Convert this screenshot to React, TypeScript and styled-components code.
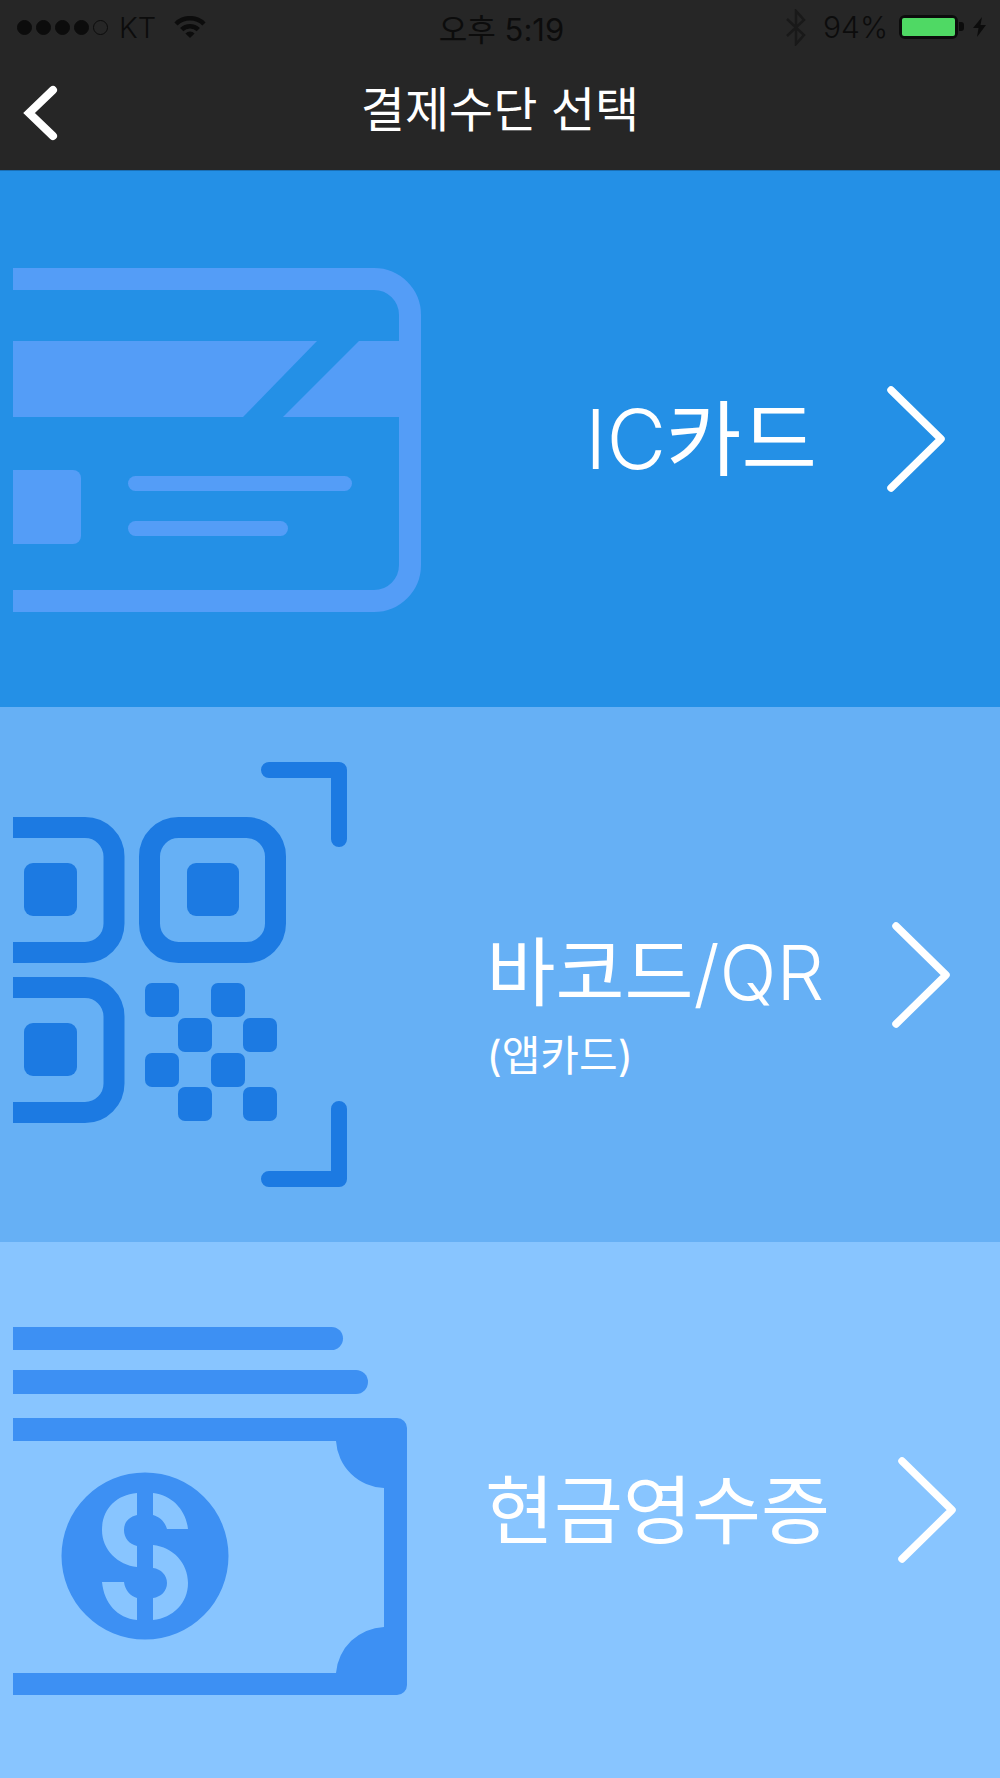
import React from "react";
import styled, { createGlobalStyle } from "styled-components";

const GlobalStyle = createGlobalStyle`
  html, body {
    margin: 0;
    padding: 0;
    background: #88c5ff;
  }
  * {
    box-sizing: border-box;
  }
`;

const FONT = `Inter, "Noto Sans CJK KR", "Liberation Sans", sans-serif`;

const Page = styled.div`
  width: 1000px;
  height: 1778px;
  display: flex;
  flex-direction: column;
  font-family: ${FONT};
  overflow: hidden;
`;

const Header = styled.header`
  height: 171px;
  background: #262626;
  border-bottom: 1px solid #1a6fb5;
  display: flex;
  flex-direction: column;
`;

const StatusBar = styled.div`
  height: 54px;
  padding: 0 14px 0 17px;
  display: grid;
  grid-template-columns: 1fr auto 1fr;
  align-items: center;
  color: #0c0c0c;
  font-size: 29px;
  font-weight: 300;
`;

const StatusLeft = styled.div`
  display: flex;
  align-items: center;
`;

const StatusRight = styled.div`
  display: flex;
  align-items: center;
  justify-content: flex-end;
`;

const Signal = styled.div`
  display: flex;
  gap: 4px;
  margin-right: 11px;
`;

const Dot = styled.span<{ $empty?: boolean }>`
  width: 15px;
  height: 15px;
  border-radius: 50%;
  border: 1.5px solid #0c0c0c;
  background: ${(p) => (p.$empty ? "transparent" : "#0c0c0c")};
`;

const Carrier = styled.span`
  margin-right: 18px;
`;

const Clock = styled.span`
  font-size: 31px;
  font-weight: 400;
`;

const Percent = styled.span`
  font-size: 30px;
  margin: 0 11px 0 17px;
`;

const Battery = styled.div`
  position: relative;
  width: 59px;
  height: 24px;
  border: 3px solid #0c0c0c;
  border-radius: 6px;
  margin-right: 15px;
  &::after {
    content: "";
    position: absolute;
    right: -9px;
    top: 4px;
    width: 5px;
    height: 9px;
    background: #0c0c0c;
    border-radius: 0 3px 3px 0;
  }
`;

const BatteryFill = styled.div`
  height: 100%;
  background: #4fd964;
  border-radius: 2px;
`;

const NavBar = styled.div`
  flex: 1;
  padding-bottom: 5px;
  display: grid;
  grid-template-columns: 1fr auto 1fr;
  align-items: center;
`;

const BackButton = styled.div`
  display: flex;
  padding: 6px 0 0 22px;
`;

const Title = styled.h1`
  margin: 0;
  color: #fff;
  font-size: 48px;
  font-weight: 400;
  line-height: 1;
`;

const Panel = styled.section<{ $bg: string; $right: number }>`
  flex: 1;
  background: ${(p) => p.$bg};
  display: flex;
  align-items: center;
  padding-left: 13px;
  padding-right: ${(p) => p.$right}px;
`;

const IconSlot = styled.div<{ $top: number }>`
  display: flex;
  margin-top: ${(p) => p.$top}px;
`;

const Label = styled.div<{ $gap: number }>`
  margin-left: auto;
  margin-right: ${(p) => p.$gap}px;
  padding-top: 2px;
  color: #fff;
  display: flex;
  flex-direction: column;
`;

const MainText = styled.div<{ $size: number }>`
  font-size: ${(p) => p.$size}px;
  font-weight: 400;
  line-height: 90px;
  white-space: nowrap;
`;

const Latin = styled.span`
  font-weight: 300;
`;

const SubText = styled.div`
  font-size: 42px;
  font-weight: 400;
  line-height: 50px;
  margin-top: 13px;
  margin-bottom: -57px;
  white-space: nowrap;
`;

const Chevron = () => (
  <svg width="60" height="108" viewBox="0 0 60 108" fill="none">
    <path d="M5 5 L55 54 L5 103" stroke="#fff" strokeWidth="7.5" strokeLinecap="round" strokeLinejoin="round" />
  </svg>
);

const BackIcon = () => (
  <svg width="36" height="60" viewBox="0 0 36 60" fill="none">
    <path d="M31 7 L7 30 L31 53" stroke="#fff" strokeWidth="8" strokeLinecap="round" strokeLinejoin="miter" />
  </svg>
);

const WifiIcon = () => (
  <svg width="32" height="22" viewBox="0 0 32 22" fill="#0c0c0c">
    <path d="M16 22 L11.400 17.400 A6.500 6.500 0 0 1 20.600 17.400 Z" />
    <path d="M6.100 12.100 A14 14 0 0 1 25.900 12.100 L22.700 15.300 A9.500 9.500 0 0 0 9.300 15.300 Z" />
    <path d="M0.400 6.400 A22 22 0 0 1 31.600 6.400 L28.400 9.600 A17.500 17.500 0 0 0 3.600 9.600 Z" />
  </svg>
);

const BluetoothIcon = () => (
  <svg width="20" height="37" viewBox="0 0 20 37" fill="none">
    <path d="M1 10 L18 26 L10 35 V2 L18 11 L1 27" stroke="#191919" strokeWidth="2.500" />
  </svg>
);

const BoltIcon = () => (
  <svg width="13" height="20" viewBox="0 0 13 20" fill="#0c0c0c">
    <path d="M9 0 L0 11 H5.500 L4 20 L13 8 H7.500 Z" />
  </svg>
);

const CardIcon = () => (
  <svg width="408" height="344" viewBox="13 268 408 344" fill="#549df7">
    <path d="M13 279 H374 A36 36 0 0 1 410 315 V565 A36 36 0 0 1 374 601 H13" fill="none" stroke="#549df7" strokeWidth="22" />
    <path d="M13 341 H317 L243 417 H13 Z" />
    <path d="M359 341 H399 V417 H283 Z" />
    <path d="M13 470 H73 A8 8 0 0 1 81 478 V536 A8 8 0 0 1 73 544 H13 Z" />
    <rect x="128" y="476" width="224" height="15" rx="7.500" />
    <rect x="128" y="521" width="160" height="15" rx="7.500" />
  </svg>
);

const QR_DOTS: [number, number][] = [
  [145, 983],
  [211, 983],
  [178, 1018],
  [243, 1018],
  [145, 1053],
  [211, 1053],
  [178, 1087],
  [243, 1087],
];

const QrIcon = () => (
  <svg width="334" height="425" viewBox="13 762 334 425" fill="#1c7ae2">
    <g fill="none" stroke="#1c7ae2" strokeWidth="21">
      <path d="M13 827.500 H85 A29 29 0 0 1 114 856.500 V923.500 A29 29 0 0 1 85 952.500 H13" />
      <rect x="149.500" y="827.500" width="126" height="125" rx="29" />
      <path d="M13 987.500 H85 A29 29 0 0 1 114 1016.500 V1083.500 A29 29 0 0 1 85 1112.500 H13" />
    </g>
    <rect x="24" y="863" width="53" height="53" rx="9" />
    <rect x="187" y="863" width="52" height="53" rx="9" />
    <rect x="24" y="1023" width="53" height="53" rx="9" />
    {QR_DOTS.map(([x, y]) => (
      <rect key={`${x}-${y}`} x={x} y={y} width="34" height="34" rx="7" />
    ))}
    <g fill="none" stroke="#1c7ae2" strokeWidth="16" strokeLinecap="round" strokeLinejoin="round">
      <path d="M269 770 H339 V839" />
      <path d="M269 1179 H339 V1109" />
    </g>
  </svg>
);

const CashIcon = () => (
  <svg width="394" height="368" viewBox="13 1327 394 368" fill="#3d90f3">
    <path d="M13 1327 H331.500 A11.500 11.500 0 0 1 331.500 1350 H13 Z" />
    <path d="M13 1370 H356 A12 12 0 0 1 356 1394 H13 Z" />
    <path d="M13 1418 H397 A10 10 0 0 1 407 1428 V1685 A10 10 0 0 1 397 1695 H13 V1673 H336 A50 50 0 0 1 384 1627 V1488 A50 50 0 0 1 336 1441 H13 Z" />
    <path
      fillRule="evenodd"
      d="M61.500 1556 A83.500 83.500 0 1 1 228.500 1556 A83.500 83.500 0 1 1 61.500 1556 Z
         M137 1493 C115 1495 102 1510 102 1530 C102 1550 118 1565 137 1567 V1546 C129 1544 124 1538 124 1530 C124 1522 129 1517 137 1515 Z
         M153 1493 C172 1495 186 1510 188 1529 H167 C165 1522 160 1517 153 1515 Z
         M153 1545 C173 1547 188 1563 188 1583 C188 1603 173 1618 153 1620 V1598 C161 1597 167 1591 167 1583 C167 1575 161 1569 153 1568 Z
         M137 1620 C117 1618 104 1603 102 1582 H124 C125 1590 130 1596 137 1598 Z"
    />
  </svg>
);

export default function App() {
  return (
    <Page>
      <GlobalStyle />
      <Header>
        <StatusBar>
          <StatusLeft>
            <Signal>
              <Dot />
              <Dot />
              <Dot />
              <Dot />
              <Dot $empty />
            </Signal>
            <Carrier>KT</Carrier>
            <WifiIcon />
          </StatusLeft>
          <Clock>오후 5:19</Clock>
          <StatusRight>
            <BluetoothIcon />
            <Percent>94%</Percent>
            <Battery>
              <BatteryFill />
            </Battery>
            <BoltIcon />
          </StatusRight>
        </StatusBar>
        <NavBar>
          <BackButton>
            <BackIcon />
          </BackButton>
          <Title>결제수단 선택</Title>
        </NavBar>
      </Header>
      <Panel $bg="#2490e6" $right={54}>
        <IconSlot $top={3}>
          <CardIcon />
        </IconSlot>
        <Label $gap={69}>
          <MainText $size={82}>
            <Latin>IC</Latin>카드
          </MainText>
        </Label>
        <Chevron />
      </Panel>
      <Panel $bg="#66b0f5" $right={49}>
        <IconSlot $top={0}>
          <QrIcon />
        </IconSlot>
        <Label $gap={67}>
          <MainText $size={75}>
            바코드<Latin>/QR</Latin>
          </MainText>
          <SubText>(앱카드)</SubText>
        </Label>
        <Chevron />
      </Panel>
      <Panel $bg="#88c5ff" $right={43}>
        <IconSlot $top={2}>
          <CashIcon />
        </IconSlot>
        <Label $gap={67}>
          <MainText $size={75}>현금영수증</MainText>
        </Label>
        <Chevron />
      </Panel>
    </Page>
  );
}
